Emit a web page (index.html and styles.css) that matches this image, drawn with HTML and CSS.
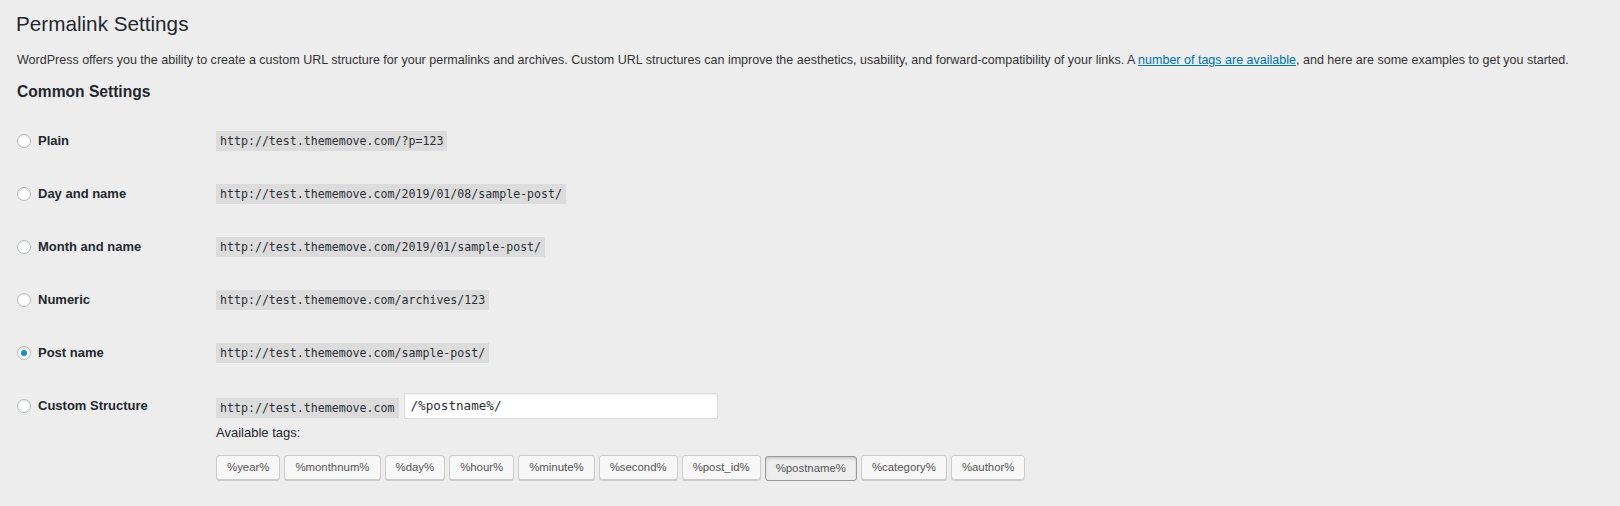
FILE: index.html
```html
<!DOCTYPE html>
<html lang="en">
<head>
<meta charset="utf-8">
<title>Permalink Settings</title>
<link rel="stylesheet" href="styles.css">
</head>
<body>
<div class="wrap">
  <h1 class="title">Permalink Settings</h1>
  <p class="intro">WordPress offers you the ability to create a custom URL structure for your permalinks and archives. Custom URL structures can improve the aesthetics, usability, and forward-compatibility of your links. A <a href="#" class="link">number of tags are available</a>, and here are some examples to get you started.</p>
  <h2 class="subtitle">Common Settings</h2>
  <div class="table">
    <div class="row">
      <label class="th"><input type="radio" name="p" class="radio">Plain</label>
      <div class="td"><code class="code">http://test.thememove.com/?p=123</code></div>
    </div>
    <div class="row">
      <label class="th"><input type="radio" name="p" class="radio">Day and name</label>
      <div class="td"><code class="code">http://test.thememove.com/2019/01/08/sample-post/</code></div>
    </div>
    <div class="row">
      <label class="th"><input type="radio" name="p" class="radio">Month and name</label>
      <div class="td"><code class="code">http://test.thememove.com/2019/01/sample-post/</code></div>
    </div>
    <div class="row">
      <label class="th"><input type="radio" name="p" class="radio">Numeric</label>
      <div class="td"><code class="code">http://test.thememove.com/archives/123</code></div>
    </div>
    <div class="row">
      <label class="th"><input type="radio" name="p" class="radio" checked>Post name</label>
      <div class="td"><code class="code">http://test.thememove.com/sample-post/</code></div>
    </div>
    <div class="row">
      <label class="th"><input type="radio" name="p" class="radio">Custom Structure</label>
      <div class="td td-custom">
        <div class="custom-line">
          <code class="code code-base">http://test.thememove.com</code>
          <input type="text" class="custom-input" value="/%postname%/">
        </div>
        <p class="avail">Available tags:</p>
        <div class="tags">
          <button class="tag">%year%</button>
          <button class="tag">%monthnum%</button>
          <button class="tag">%day%</button>
          <button class="tag">%hour%</button>
          <button class="tag">%minute%</button>
          <button class="tag">%second%</button>
          <button class="tag">%post_id%</button>
          <button class="tag tag-active">%postname%</button>
          <button class="tag">%category%</button>
          <button class="tag">%author%</button>
        </div>
      </div>
    </div>
  </div>
</div>
</body>
</html>
```
FILE: styles.css
```css
html, body {
  margin: 0;
  padding: 0;
  background: #ededed;
}
body {
  font-family: "Liberation Sans", Arial, sans-serif;
  color: #23282d;
}
.wrap {
  padding: 10px 0 0 17px;
}
.title {
  margin: 0 0 0 -1px;
  font-size: 20.7px;
  line-height: 28px;
  font-weight: 400;
  color: #23282d;
}
.intro {
  margin: 13.3px 0 0;
  font-size: 12.53px;
  line-height: 18px;
  color: #333;
}
.link {
  color: #0073aa;
  text-decoration: underline;
}
.subtitle {
  margin: 13.1px 0 0;
  font-size: 15.6px;
  line-height: 20px;
  font-weight: 700;
  color: #23282d;
}
.table {
  margin-top: 11.1px;
}
.row {
  display: grid;
  grid-template-columns: 199px 1fr;
  align-items: start;
}
.th {
  display: block;
  padding: 19px 0 16px;
  font-size: 13px;
  line-height: 18px;
  font-weight: 700;
  color: #23282d;
}
.radio {
  -webkit-appearance: none;
  appearance: none;
  display: inline-block;
  box-sizing: border-box;
  width: 14px;
  height: 14px;
  margin: 0 7px 0 0;
  vertical-align: -3px;
  border: 1px solid #b4b9be;
  border-radius: 50%;
  background: #fff;
  box-shadow: inset 0 1px 2px rgba(0,0,0,0.1);
  position: relative;
}
.radio:checked::before {
  content: "";
  position: absolute;
  left: 3px;
  top: 3px;
  width: 6px;
  height: 6px;
  border-radius: 50%;
  background: #1e8cbe;
}
.td {
  padding: 19px 0 16px;
  font-size: 13px;
  line-height: 18px;
}
.code {
  font-family: "DejaVu Sans Mono", "Liberation Mono", monospace;
  font-size: 11.6px;
  padding: 3px 4px 3px;
  background: rgba(0,0,0,0.07);
  color: #2a2f33;
}
.td-custom {
  padding-top: 14.5px;
}
.custom-line {
  display: flex;
  align-items: flex-start;
  gap: 5px;
}
.code-base {
  display: block;
  margin-top: 5px;
  line-height: 14px;
}
.custom-input {
  box-sizing: border-box;
  width: 314px;
  height: 26px;
  margin: 0;
  padding: 0 6px;
  border: 1px solid #ddd;
  background: #fff;
  box-shadow: inset 0 1px 2px rgba(0,0,0,0.07);
  font-family: "DejaVu Sans Mono", "Liberation Mono", monospace;
  font-size: 12.6px;
  color: #2a2f33;
  outline: none;
}
.avail {
  margin: 5.5px 0 0;
  font-size: 13px;
  line-height: 18px;
  color: #23282d;
}
.tags {
  display: flex;
  gap: 4px;
  margin-top: 12.5px;
}
.tag {
  box-sizing: border-box;
  height: 25px;
  margin: 0;
  padding: 0 10px;
  border: 1px solid #ccc;
  border-radius: 3px;
  background: #f7f7f7;
  box-shadow: 0 1px 0 #ccc;
  font-family: "Liberation Sans", Arial, sans-serif;
  font-size: 11.4px;
  line-height: 23px;
  color: #555;
  cursor: pointer;
}
.tag-active {
  background: #eee;
  border-color: #999;
  box-shadow: inset 0 2px 5px -3px rgba(0,0,0,0.5);
  transform: translateY(1px);
}
```
